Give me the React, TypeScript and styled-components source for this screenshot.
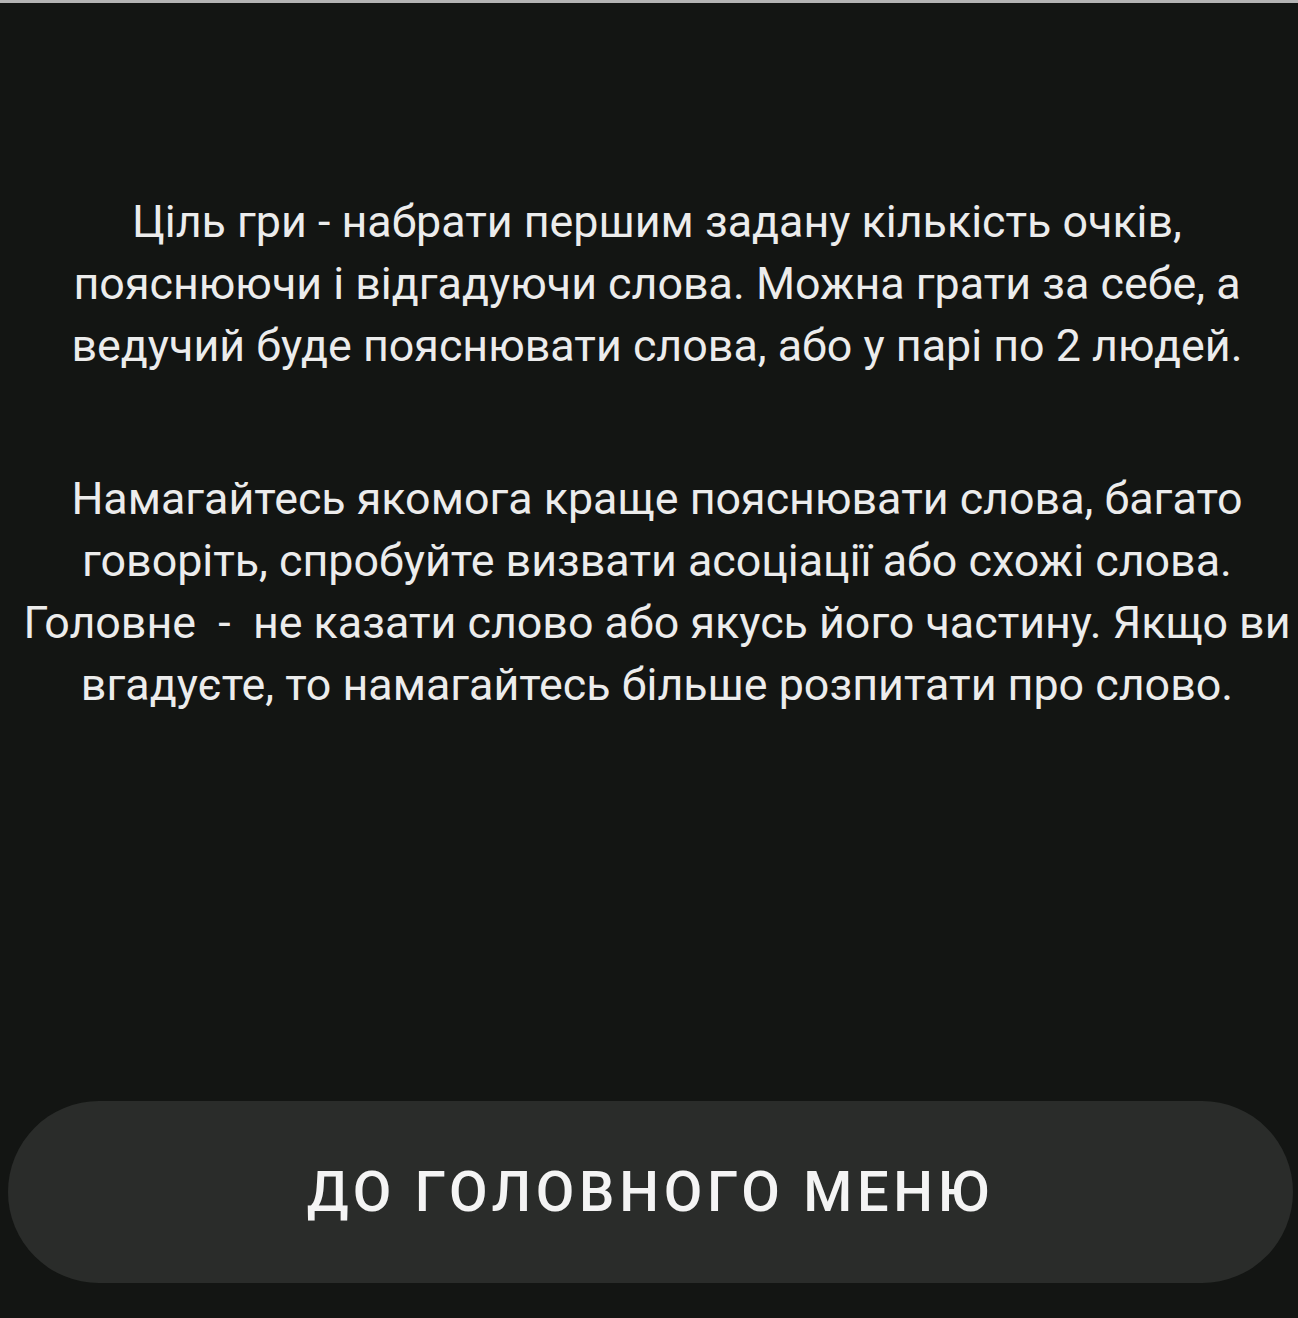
import React from 'react';
import styled, { createGlobalStyle } from 'styled-components';

const GlobalStyle = createGlobalStyle`
  html, body {
    margin: 0;
    padding: 0;
    background: #131513;
  }
  body {
    font-family: Roboto, "Noto Sans", sans-serif;
  }
`;

const Screen = styled.div`
  box-sizing: border-box;
  height: 1318px;
  display: flex;
  flex-direction: column;
  background: #131513;
  border-top: 3px solid #b4b4b4;
`;

const Rules = styled.div`
  flex: 1;
  padding: 188px 0 0 16px;
  display: flex;
  flex-direction: column;
  gap: 91px;
`;

const Paragraph = styled.p`
  margin: 0;
  text-align: center;
  color: #ececec;
  font-size: 44.8px;
  line-height: 62px;
  white-space: pre;
`;

const Footer = styled.div`
  padding: 0 5px 35px 8px;
`;

const MenuButton = styled.button`
  width: 100%;
  height: 182px;
  border: none;
  border-radius: 91px;
  background: #2a2c2a;
  color: #f4f4f4;
  font-family: Roboto, "Noto Sans", sans-serif;
  font-size: 56px;
  font-weight: 500;
  letter-spacing: 0.085em;
  text-transform: uppercase;
  cursor: pointer;
`;

const first = [
  'Ціль гри - набрати першим задану кількість очків,',
  'пояснюючи і відгадуючи слова. Можна грати за себе, а',
  'ведучий буде пояснювати слова, або у парі по 2 людей.',
];

const second = [
  'Намагайтесь якомога краще пояснювати слова, багато',
  'говоріть, спробуйте визвати асоціації або схожі слова.',
  'Головне  -  не казати слово або якусь його частину. Якщо ви',
  'вгадуєте, то намагайтесь більше розпитати про слово.',
];

const App: React.FC = () => {
  return (
    <>
      <GlobalStyle />
      <Screen>
        <Rules>
          <Paragraph>{first.join('\n')}</Paragraph>
          <Paragraph>{second.join('\n')}</Paragraph>
        </Rules>
        <Footer>
          <MenuButton>до головного меню</MenuButton>
        </Footer>
      </Screen>
    </>
  );
};

export default App;
